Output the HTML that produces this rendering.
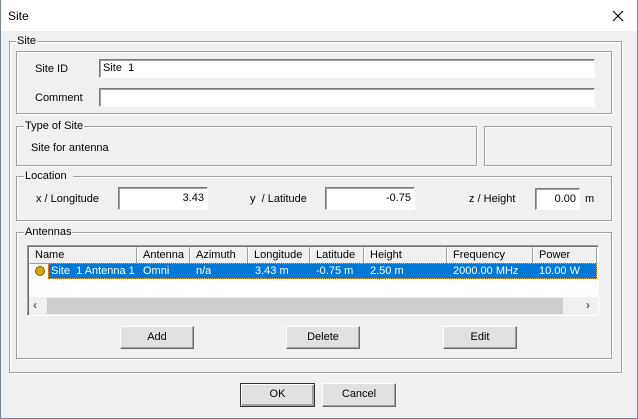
<!DOCTYPE html>
<html><head><meta charset="utf-8"><style>
*{box-sizing:border-box;margin:0;padding:0}
body{width:638px;height:419px;background:#f0f0f0;font-family:"Liberation Sans",sans-serif;font-size:11px;color:#000;position:relative;overflow:hidden}
.a{position:absolute}
.win{left:0;top:0;width:638px;height:419px;border:1px solid #7a8696;border-top:none}
.title{left:1px;top:0;width:636px;height:31px;background:#fff}
.grp{border:1px solid #a0a0a0;box-shadow:inset 1px 1px 0 #fff,1px 1px 0 #fff}
.lbl{background:#f0f0f0;padding:0 1px;line-height:13px}
.inp{background:#fff;border:1px solid;border-color:#7a7a7a #fff #fff #7a7a7a;box-shadow:inset 1px 1px 0 #a0a0a0;line-height:17px;padding:0 3px;white-space:nowrap}
.r{text-align:right}
.btn{background:#e1e1e1;border:1px solid;border-color:#fff #696969 #696969 #fff;box-shadow:inset -1px -1px 0 #a0a0a0;text-align:center;line-height:21px}
.hd{top:247px;height:17px;background:#f0f0f0;border:1px solid;border-color:#fff #a0a0a0 #a0a0a0 #fff;line-height:15px;padding-left:5px;white-space:nowrap;overflow:hidden}
.cell{top:263px;line-height:15px;color:#fff;white-space:nowrap}
</style></head><body>
<div class="a win"></div>
<div class="a title"></div>
<div class="a" style="left:8px;top:9px;font-size:12px">Site</div>
<svg class="a" style="left:612px;top:10px" width="12" height="12"><path d="M1 1L11 11M11 1L1 11" stroke="#000" stroke-width="1.2"/></svg>

<div class="a grp" style="left:9px;top:41px;width:613px;height:332px"></div>
<div class="a lbl" style="left:16px;top:35px">Site</div>

<div class="a grp" style="left:16px;top:51px;width:596px;height:63px"></div>
<div class="a" style="left:35px;top:63px">Site ID</div>
<div class="a inp" style="left:99px;top:59px;width:496px;height:19px">Site&nbsp; 1</div>
<div class="a" style="left:35px;top:92px">Comment</div>
<div class="a inp" style="left:99px;top:88px;width:496px;height:19px"></div>

<div class="a grp" style="left:16px;top:126px;width:461px;height:40px"></div>
<div class="a lbl" style="left:24px;top:120px">Type of Site</div>
<div class="a" style="left:31px;top:142px">Site for antenna</div>
<div class="a grp" style="left:484px;top:126px;width:128px;height:40px"></div>

<div class="a grp" style="left:16px;top:176px;width:596px;height:45px"></div>
<div class="a lbl" style="left:24px;top:170px;padding-right:6px">Location</div>
<div class="a" style="left:36px;top:193px">x / Longitude</div>
<div class="a inp r" style="left:118px;top:187px;width:90px;height:23px;line-height:21px">3.43</div>
<div class="a" style="left:250px;top:193px">y&nbsp; / Latitude</div>
<div class="a inp r" style="left:325px;top:187px;width:90px;height:23px;line-height:21px">-0.75</div>
<div class="a" style="left:469px;top:193px">z / Height</div>
<div class="a inp r" style="left:535px;top:188px;width:45px;height:22px;line-height:21px">0.00</div>
<div class="a" style="left:585px;top:193px">m</div>

<div class="a grp" style="left:16px;top:232px;width:596px;height:127px"></div>
<div class="a lbl" style="left:24px;top:226px">Antennas</div>
<div class="a" style="left:27px;top:245px;width:572px;height:71px;background:#fff;border:1px solid;border-color:#a0a0a0 #fff #fff #a0a0a0;box-shadow:inset 1px 1px 0 #696969"></div>
<div class="a hd" style="left:29px;width:108px">Name</div>
<div class="a hd" style="left:137px;width:53px">Antenna</div>
<div class="a hd" style="left:190px;width:58px">Azimuth</div>
<div class="a hd" style="left:248px;width:62px">Longitude</div>
<div class="a hd" style="left:310px;width:54px">Latitude</div>
<div class="a hd" style="left:364px;width:83px">Height</div>
<div class="a hd" style="left:447px;width:86px">Frequency</div>
<div class="a hd" style="left:533px;width:64px">Power</div>
<div class="a" style="left:48px;top:263px;width:549px;height:16px;background:#0078d7;border:1px dotted #f0a040"></div>
<div class="a" style="left:35px;top:266px;width:10px;height:10px;border-radius:50%;background:#d4a800;border:1px solid #806000"></div>
<div class="a cell" style="left:51px;top:264px">Site&nbsp; 1 Antenna 1</div>
<div class="a cell" style="left:143px;top:264px">Omni</div>
<div class="a cell" style="left:196px;top:264px">n/a</div>
<div class="a cell" style="left:255px;top:264px">3.43 m</div>
<div class="a cell" style="left:316px;top:264px">-0.75 m</div>
<div class="a cell" style="left:370px;top:264px">2.50 m</div>
<div class="a cell" style="left:453px;top:264px">2000.00 MHz</div>
<div class="a cell" style="left:539px;top:264px">10.00 W</div>
<div class="a" style="left:29px;top:297px;width:569px;height:18px;background:#f0f0f0"></div>
<div class="a" style="left:47px;top:298px;width:516px;height:16px;background:#cdcdcd"></div>
<div class="a" style="left:33px;top:298px;color:#606060;font-weight:bold;font-size:12px">&lsaquo;</div>
<div class="a" style="left:586px;top:298px;color:#606060;font-weight:bold;font-size:12px">&rsaquo;</div>

<div class="a btn" style="left:120px;top:326px;width:74px;height:23px">Add</div>
<div class="a btn" style="left:286px;top:326px;width:74px;height:23px">Delete</div>
<div class="a btn" style="left:443px;top:326px;width:74px;height:23px">Edit</div>
<div class="a btn" style="left:240px;top:383px;width:75px;height:24px;border:1px solid #333;box-shadow:inset 1px 1px 0 #fff,inset -2px -2px 0 #a0a0a0">OK</div>
<div class="a btn" style="left:322px;top:383px;width:74px;height:24px">Cancel</div>
</body></html>
